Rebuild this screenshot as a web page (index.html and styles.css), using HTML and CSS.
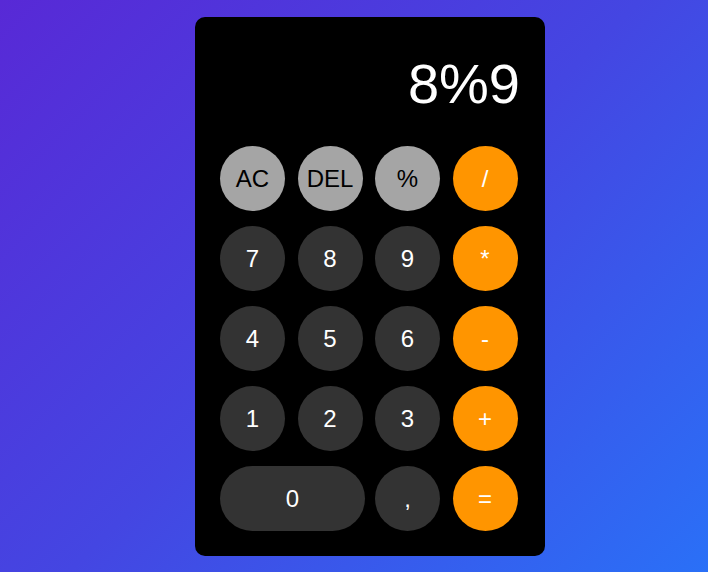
FILE: index.html
```html
<!DOCTYPE html>
<html lang="en">
<head>
<meta charset="utf-8">
<title>Calculator</title>
<link rel="stylesheet" href="styles.css">
</head>
<body>
<div class="calculator">
  <div class="display">8%9</div>
  <div class="keys">
    <button class="key light">AC</button>
    <button class="key light">DEL</button>
    <button class="key light">%</button>
    <button class="key op">/</button>
    <button class="key">7</button>
    <button class="key">8</button>
    <button class="key">9</button>
    <button class="key op">*</button>
    <button class="key">4</button>
    <button class="key">5</button>
    <button class="key">6</button>
    <button class="key op">-</button>
    <button class="key">1</button>
    <button class="key">2</button>
    <button class="key">3</button>
    <button class="key op">+</button>
    <button class="key zero">0</button>
    <button class="key">,</button>
    <button class="key op">=</button>
  </div>
</div>
</body>
</html>
```
FILE: styles.css
```css
* { box-sizing: border-box; }
html, body { margin: 0; padding: 0; }
body {
  min-height: 100vh;
  background: linear-gradient(135deg, #5829d6 0%, #4446e2 50%, #2a70f7 100%);
  font-family: "Liberation Sans", Arial, sans-serif;
  display: flex;
  justify-content: center;
  align-items: flex-start;
  padding: 17px 0 0 32px;
}
.calculator {
  width: 350px;
  background: #000;
  border-radius: 10px;
  padding: 25px;
}
.display {
  color: #fff;
  font-size: 56px;
  line-height: 56px;
  text-align: right;
  padding-top: 14px;
  height: 104px;
}
.keys {
  display: grid;
  grid-template-columns: repeat(4, 65px);
  grid-auto-rows: 65px;
  column-gap: 12.5px;
  row-gap: 15px;
}
.key {
  width: 65px;
  height: 65px;
  border: none;
  border-radius: 50%;
  background: #333333;
  color: #fff;
  font-family: "Liberation Sans", Arial, sans-serif;
  font-size: 24px;
  padding: 0;
  display: flex;
  align-items: center;
  justify-content: center;
}
.key.light { background: #a5a5a5; color: #000; }
.key.op { background: #ff9500; color: #fff; }
.key.zero {
  grid-column: span 2;
  width: 145px;
  border-radius: 33px;
}
```
